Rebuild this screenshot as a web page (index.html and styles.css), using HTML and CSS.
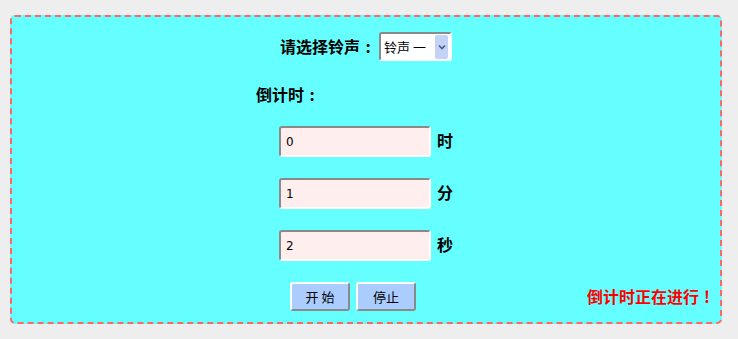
FILE: index.html
```html
<!DOCTYPE html>
<html lang="zh-CN">
<head>
<meta charset="utf-8">
<title>倒计时</title>
<link rel="stylesheet" href="styles.css">
</head>
<body>
<div class="panel">
  <div class="row-select">
    <span class="label">请选择铃声<span class="punct">:</span></span>
    <span class="select-wrap">
      <select class="ring">
        <option>铃声 一</option>
        <option>铃声 二</option>
      </select>
      <span class="arrow"><svg width="8" height="6" viewBox="0 0 8 6"><path d="M1 1.5 L4 4.5 L7 1.5" fill="none" stroke="#4a5a80" stroke-width="1.6"/></svg></span>
    </span>
  </div>
  <div class="row-title"><span class="label">倒计时<span class="punct">:</span></span></div>
  <div class="row-input"><input class="num" type="text" value="0"><span class="label unit">时</span></div>
  <div class="row-input"><input class="num" type="text" value="1"><span class="label unit">分</span></div>
  <div class="row-input"><input class="num" type="text" value="2"><span class="label unit">秒</span></div>
  <div class="row-buttons">
    <button class="btn">开 始</button>
    <button class="btn">停止</button>
    <span class="status">倒计时正在进行<span class="punct">!</span></span>
  </div>
</div>
</body>
</html>
```
FILE: styles.css
```css
html, body {
  margin: 0;
  padding: 0;
  background: #eeeeee;
}
body {
  padding: 15px 16px 0 10px;
  font-family: "Noto Sans CJK SC", "DejaVu Sans", sans-serif;
}
.panel {
  box-sizing: border-box;
  height: 309px;
  border: 2px dashed #ff6666;
  border-radius: 5px;
  background: #66ffff;
}
.label {
  font-size: 16px;
  font-weight: bold;
  line-height: 20px;
  color: #000;
}
.punct {
  display: inline-block;
  width: 1em;
  text-align: center;
}
.row-select {
  margin-top: 15px;
  display: flex;
  justify-content: center;
  align-items: center;
  gap: 3px;
  height: 29px;
}
.row-select .label {
  padding-bottom: 2px;
}
.select-wrap {
  position: relative;
  display: inline-block;
  width: 73px;
  height: 29px;
}
.ring {
  -webkit-appearance: none;
  appearance: none;
  box-sizing: border-box;
  width: 73px;
  height: 29px;
  margin: 0;
  padding: 0 0 0 3px;
  border: 2px solid;
  border-color: #8a8a8a #ffffff #ffffff #8a8a8a;
  border-radius: 3px;
  background: #ffffff;
  font-family: "Noto Sans CJK SC", sans-serif;
  font-size: 13px;
  color: #000;
}
.arrow {
  position: absolute;
  left: 56px;
  top: 3px;
  width: 13px;
  height: 24px;
  background: #c3d3f7;
  border-radius: 2px;
  display: flex;
  align-items: center;
  justify-content: center;
  pointer-events: none;
}
.row-title {
  margin-top: 21px;
  padding-left: 244px;
  height: 20px;
}
.row-input {
  margin-top: 21px;
  display: flex;
  justify-content: center;
  align-items: center;
  gap: 6px;
  height: 31px;
}
.row-title + .row-input {
  margin-top: 24px;
}
.unit {
  padding-bottom: 4px;
}
.num {
  box-sizing: border-box;
  width: 152px;
  height: 31px;
  margin: 0;
  padding: 0 0 0 5px;
  border: 2px solid;
  border-color: #8a8a8a #ffffff #ffffff #8a8a8a;
  border-radius: 3px;
  background: #ffeeee;
  font-family: "DejaVu Sans", sans-serif;
  font-size: 12px;
  color: #000;
  outline: none;
}
.row-buttons {
  margin-top: 21px;
  display: flex;
  align-items: center;
  gap: 6px;
  padding: 0 5px 0 278px;
  height: 29px;
}
.btn {
  box-sizing: border-box;
  width: 60px;
  height: 29px;
  margin: 0;
  padding: 0;
  border: 2px solid;
  border-color: #ffffff #8a8a8a #8a8a8a #ffffff;
  border-radius: 3px;
  background: #aaccff;
  font-family: "Noto Sans CJK SC", sans-serif;
  font-size: 13px;
  color: #000;
}
.status {
  margin-left: auto;
  padding-bottom: 2px;
  font-size: 16px;
  font-weight: bold;
  line-height: 20px;
  color: #ff0000;
}
```
